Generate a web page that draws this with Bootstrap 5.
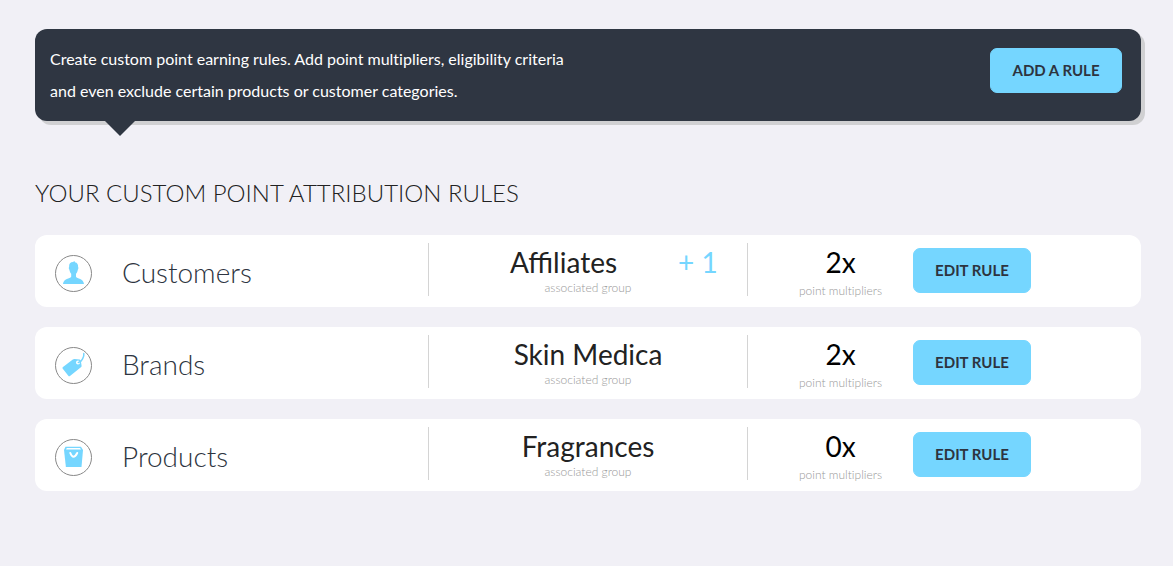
<!DOCTYPE html>
<html lang="en">
<head>
<meta charset="utf-8">
<meta name="viewport" content="width=device-width, initial-scale=1">
<title>Custom point rules</title>
<link href="https://cdn.jsdelivr.net/npm/bootstrap@5.3.0/dist/css/bootstrap.min.css" rel="stylesheet">
<style>
body { background: #f1f0f6; color: #2d3440; font-family: Lato, sans-serif; }
.page { padding: 29px 32px 40px 35px; }
.intro { background: #2f3642; color: #fff; border-radius: 12px; box-shadow: 4px 4px 0 #d0d0d2; padding: 14px 19px 14px 15px; line-height: 32px; }
.intro::after { content: ""; position: absolute; left: 70px; top: 100%; border: 15px solid transparent; border-top-color: #2f3642; border-bottom: 0; }
.intro-text { max-width: 530px; font-size: 16px; font-variant-ligatures: none; }
.rule-btn { --bs-btn-bg: #75d6ff; --bs-btn-color: #2d3440; --bs-btn-border-color: #75d6ff; --bs-btn-hover-bg: #5ccbf8; --bs-btn-hover-color: #2d3440; --bs-btn-padding-x: 0; --bs-btn-font-size: 15px; --bs-btn-font-weight: 700; --bs-btn-border-radius: 7px; height: 45px; width: 118px; margin-top: 5px; }
.rule-btn.wide { width: 132px; }
.section-title { font-size: 24px; font-weight: 300; line-height: 32px; color: #222; margin: 56px 0 26px; }
.rule-list { gap: 20px; }
.rule { display: grid; grid-template: 100% / minmax(0, 393fr) minmax(0, 320fr) minmax(0, 393fr); background: #fff; border-radius: 12px; height: 72px; padding: 8px 0 11px; }
.rule-kind { padding-left: 20px; }
.rule-group { border: solid #d4d4d4; border-width: 0 1px; }
.rule-action { padding-left: 49px; gap: 29px; }
.kind-icon { width: 37px; height: 37px; margin: 8px 30px 0 0; }
.kind-name { font-size: 28px; font-weight: 300; line-height: 40px; color: #2d3440; margin: 4px 0 0; }
.value { font-size: 28px; line-height: 38px; color: #222; }
.value.times { color: #000; }
.with-extra { padding-left: 20px; }
.extra { width: 69px; color: #75d6ff; }
.hint { font-size: 12px; font-weight: 300; line-height: 14px; color: #999; font-variant-ligatures: none; }
.times + .hint { margin-top: 3px; }
.points { width: 87px; }
</style>
</head>
<body>
<main class="page">
  <section class="intro position-relative d-flex justify-content-between align-items-start">
    <p class="intro-text mb-0">Create custom point earning rules. Add point multipliers, eligibility criteria and even exclude certain products or customer categories.</p>
    <button type="button" class="btn rule-btn wide">ADD A RULE</button>
  </section>
  <h1 class="section-title">YOUR CUSTOM POINT ATTRIBUTION RULES</h1>
  <div class="rule-list d-grid">
    <article class="rule">
      <div class="rule-kind d-flex align-items-center">
        <svg class="kind-icon" viewBox="0 0 37 37" aria-hidden="true"><circle cx="18.500" cy="18.500" r="18" fill="#fff" stroke="#888"/><path fill="#75d6ff" d="M19.500 6l.4 1.200c2.500.5 3.400 2.300 3.200 4.800.5.3.4 1.800-.3 2.800-.3 1.800-.8 3-1.800 4v3c1 2 7.500 1.900 8 7.200H8c.5-5.300 7-5.200 8.200-7.200v-3c-1-1-1.500-2.200-1.800-4-.7-1-.8-2.500-.3-2.800-.3-3 1.400-4.900 3.900-4.900z"/></svg>
        <h2 class="kind-name">Customers</h2>
      </div>
      <div class="rule-group text-center">
        <div class="value with-extra d-flex"><span class="flex-fill">Affiliates</span><span class="extra text-start">+ 1</span></div>
        <div class="hint">associated group</div>
      </div>
      <div class="rule-action d-flex align-items-start">
        <div class="points text-center text-nowrap"><div class="value times">2x</div><div class="hint">point multipliers</div></div>
        <button type="button" class="btn rule-btn">EDIT RULE</button>
      </div>
    </article>
    <article class="rule">
      <div class="rule-kind d-flex align-items-center">
        <svg class="kind-icon" viewBox="0 0 37 37" aria-hidden="true"><circle cx="18.500" cy="18.500" r="18" fill="#fff" stroke="#888"/><path fill="#75d6ff" fill-rule="evenodd" d="M8 20L17.800 12.500q.8-.6 1.800-.5l5 .6q1 .2 1.200 1.100l.8 5q.1 1-.7 1.600L15 29q-1 .7-1.700-.3L7.600 21.500q-.6-.9.400-1.500zM23 13.600a2 2 0 1 0 0 4 2 2 0 0 0 0-4z"/><path fill="none" stroke="#75d6ff" stroke-width="1.500" stroke-linecap="round" d="M23.300 15.400c2.500-.3 3.300-1.200 3.900-2.800.5-1.800 2-2.500 1.600-6"/></svg>
        <h2 class="kind-name">Brands</h2>
      </div>
      <div class="rule-group text-center">
        <div class="value">Skin Medica</div>
        <div class="hint">associated group</div>
      </div>
      <div class="rule-action d-flex align-items-start">
        <div class="points text-center text-nowrap"><div class="value times">2x</div><div class="hint">point multipliers</div></div>
        <button type="button" class="btn rule-btn">EDIT RULE</button>
      </div>
    </article>
    <article class="rule">
      <div class="rule-kind d-flex align-items-center">
        <svg class="kind-icon" viewBox="0 0 37 37" aria-hidden="true"><circle cx="18.500" cy="18.500" r="18" fill="#fff" stroke="#888"/><path fill="#75d6ff" d="M10.500 7.800h15.500l2 3.200-1.500 17H10.900L9 11z"/><path fill="#fff" d="M11.800 8.900h13.200l1 1.600H11z"/><path fill="none" stroke="#fff" stroke-width="2" stroke-linecap="round" d="M15.300 14c.8 2 1.700 3.800 3.200 3.800s2.700-1.800 3.700-3.800"/></svg>
        <h2 class="kind-name">Products</h2>
      </div>
      <div class="rule-group text-center">
        <div class="value">Fragrances</div>
        <div class="hint">associated group</div>
      </div>
      <div class="rule-action d-flex align-items-start">
        <div class="points text-center text-nowrap"><div class="value times">0x</div><div class="hint">point multipliers</div></div>
        <button type="button" class="btn rule-btn">EDIT RULE</button>
      </div>
    </article>
  </div>
</main>
<script src="https://cdn.jsdelivr.net/npm/bootstrap@5.3.0/dist/js/bootstrap.bundle.min.js"></script>
</body>
</html>
